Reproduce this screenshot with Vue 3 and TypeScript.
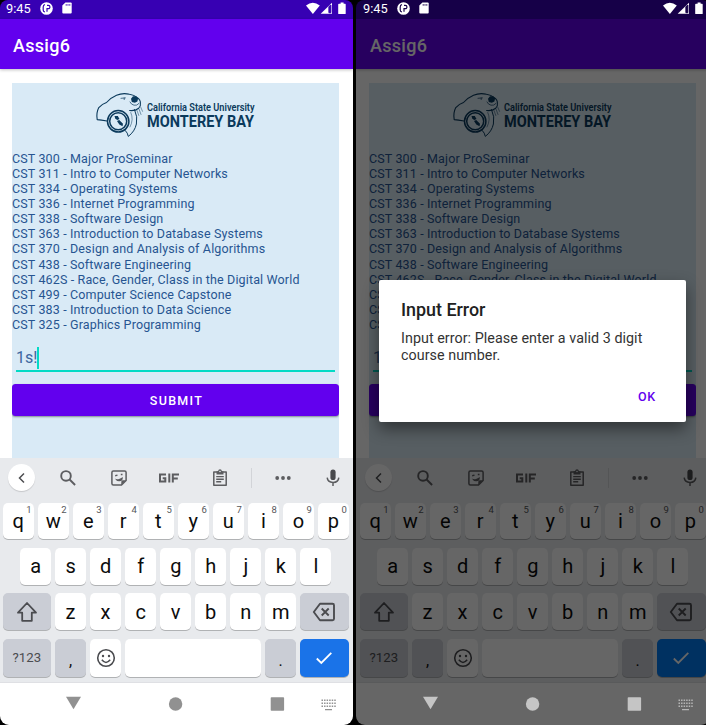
<script setup lang="ts">
interface Phone {
  id: string
  dialog: boolean
}

interface LetterKey {
  label: string
  hint?: string
}

const phones: Phone[] = [
  { id: 'entry', dialog: false },
  { id: 'error', dialog: true },
]

const courses: string[] = [
  'CST 300 - Major ProSeminar',
  'CST 311 - Intro to Computer Networks',
  'CST 334 - Operating Systems',
  'CST 336 - Internet Programming',
  'CST 338 - Software Design',
  'CST 363 - Introduction to Database Systems',
  'CST 370 - Design and Analysis of Algorithms',
  'CST 438 - Software Engineering',
  'CST 462S - Race, Gender, Class in the Digital World',
  'CST 499 - Computer Science Capstone',
  'CST 383 - Introduction to Data Science',
  'CST 325 - Graphics Programming',
]

const topRow: LetterKey[] = [...'qwertyuiop'].map((label, i) => ({
  label,
  hint: String((i + 1) % 10),
}))
const homeRow: string[] = [...'asdfghjkl']
const bottomRow: string[] = [...'zxcvbnm']
</script>

<template>
  <main class="stage">
    <section v-for="phone in phones" :key="phone.id" class="phone" :class="{ dimmed: phone.dialog }">
      <header class="status">
        <span class="clock">9:45</span>
        <svg class="p-icon" viewBox="0 0 13 13" width="13" height="13">
          <circle cx="6.5" cy="6.5" r="6.3" fill="#fff" />
          <path class="cut" d="M5 2.500Q3.200 3 3.200 5V8Q3.200 9.800 5 10M7 3.400H8.300a1.600 1.600 0 0 1 0 3.300H7V9.800" stroke-width="1.200" />
        </svg>
        <svg class="sd-icon" viewBox="0 0 10 12" width="10" height="12">
          <path d="M3.400.5H8.700q1 0 1 1V10.600q0 1-1 1H1.300q-1 0-1-1V3.600z" fill="#fff" />
          <path class="cut" d="M4.200 2v1.800M6 2v1.800M7.800 2v1.800" stroke-width=".8" />
        </svg>
        <span class="spacer"></span>
        <svg class="signals" viewBox="0 0 41 13" width="41" height="13">
          <path d="M0 3.400Q6.800-1.800 13.800 3.400L6.900 12z" fill="#fff" />
          <path d="M14.700 11.800L26 .8V11.800z" fill="#fff" />
          <path class="cut" d="M22.900 4.600V10.700h2V3z" stroke="none" />
          <path d="M33 1.800h1.600V.6h3v1.200h1.500q.6 0 .6.600V11.400q0 .6-.6.600H32.800q-.6 0-.6-.6V2.400q0-.6.8-.6z" fill="#fff" />
        </svg>
      </header>

      <div class="appbar">Assig6</div>

      <div class="content">
        <div class="panel">
          <svg class="logo" viewBox="95 91 162 48" width="162" height="48">
            <g fill="none" stroke="#0b3a5c" stroke-linecap="round" stroke-linejoin="round">
              <path d="M107 121Q101 119.800 97.200 119.600Q96 113 98.800 107.600Q102.500 103.800 106.500 102.500Q110.500 97.800 116.500 95.200Q123 92.500 129.500 94.300Q134 95 137 97.400Q140.600 99.800 140.400 103Q141 106 138.700 108.200Q135 111.200 129.600 110.500" stroke-width="1.100" />
              <path d="M121 98.300l4.400-.4M124.200 98v1.600M130 102q1.400 2.800 4 3.200q3 .8 5-1.800" stroke-width=".7" />
              <path d="M134.500 109.500Q138 117 136.400 124Q134.800 131.500 128.300 136.400Q127.800 133 125.300 130.500" stroke-width="1" />
              <path d="M130.800 112.500q3.200 7-.8 14.500M137 110.500l1.800 5M139 109l2 5.500M140.800 107.300l1.700 4" stroke-width=".5" />
              <circle cx="118.200" cy="121.300" r="10.700" stroke-width="1.500" />
              <circle cx="118.200" cy="121.300" r="8.500" stroke-width="1.500" />
            </g>
            <path d="M131 98.700l2-2.400h3.200l1.900 1.900-.7 3.200-2.600 1.300-3-.8z" fill="#0b3a5c" />
            <path d="M114.500 116h3.300l1.700 3-2.200 1-2-1.300zM117 121l2.200-1 3.800 3.800-.5 2.500-3.200-1.900z" fill="#0b3a5c" />
            <text x="147" y="111.300" class="logo-small" textLength="107.500" lengthAdjust="spacingAndGlyphs">California State University</text>
            <text x="147" y="126.800" class="logo-big" textLength="107" lengthAdjust="spacingAndGlyphs">MONTEREY BAY</text>
          </svg>
          <ul class="courses">
            <li v-for="course in courses" :key="course">{{ course }}</li>
          </ul>
          <div class="field"><span>1s!</span><i v-if="!phone.dialog" class="caret"></i></div>
          <div class="submit">SUBMIT</div>
        </div>
      </div>

      <div class="keyboard">
        <div class="tools">
          <span class="back">
            <svg viewBox="0 0 12 12" width="12" height="12"><path d="M8 1.500L3.500 6 8 10.500" fill="none" stroke="#4c4d50" stroke-width="1.500" /></svg>
          </span>
          <svg viewBox="0 0 18 18" width="18" height="18">
            <g fill="none" stroke="#5c5d60" stroke-width="1.900"><circle cx="7" cy="6.900" r="4.800" /><path d="M10.600 10.500l5.500 5.500" /></g>
          </svg>
          <svg viewBox="0 0 18 18" width="18" height="18">
            <path d="M3.400 2H14.600q1.500 0 1.500 1.500V11.500L11.500 16H3.400Q1.900 16 1.900 14.500V3.500Q1.900 2 3.400 2z" fill="none" stroke="#5c5d60" stroke-width="1.500" />
            <path d="M11.300 16v-3.200q0-1.500 1.500-1.500H16zM4.800 9.600q2 1 4.300.3t3.700-1.900q.3 4.300-3.600 4.300-3 0-4.400-2.700z" fill="#5c5d60" />
            <path d="M5.200 6.700l2.300-.6M10.800 5.500h1.700" stroke="#5c5d60" stroke-width="1.400" />
          </svg>
          <svg viewBox="0 0 22 10" width="22" height="10">
            <path d="M8 1.500H2v7h5.300V5.200H4.700M11.300.5v9M14.800 9.500V1.500H21M14.800 5.400h5" fill="none" stroke="#5c5d60" stroke-width="2" />
          </svg>
          <svg viewBox="0 0 16 18" width="16" height="18">
            <path d="M1.800 3H14.200V16.200H1.800z" fill="none" stroke="#5c5d60" stroke-width="1.500" stroke-linejoin="round" />
            <path d="M4.500 2.200H6Q6.400.3 8 .3T10 2.200h1.500V5.500h-7z" fill="#5c5d60" />
            <circle cx="8" cy="2.500" r=".8" fill="#e8eaed" />
            <path d="M4.200 7.600h7.600M4.200 10.200h7.600M4.200 12.800h5" stroke="#5c5d60" stroke-width="1.400" />
          </svg>
          <i class="divider"></i>
          <svg viewBox="0 0 18 6" width="18" height="6">
            <g fill="#5c5d60"><circle cx="3.200" cy="3" r="1.900" /><circle cx="9" cy="3" r="1.900" /><circle cx="14.800" cy="3" r="1.900" /></g>
          </svg>
          <svg viewBox="0 0 16 20" width="16" height="20">
            <rect x="5.400" y="1.600" width="5.200" height="10.400" rx="2.600" fill="#48494c" />
            <path d="M2.200 9.600q.4 4.700 5.800 4.800t5.800-4.800M8 14.500v3.600" fill="none" stroke="#5c5d60" stroke-width="1.500" />
          </svg>
        </div>

        <div class="row">
          <span v-for="key in topRow" :key="key.label" class="key">{{ key.label }}<sup>{{ key.hint }}</sup></span>
        </div>
        <div class="row centred">
          <span v-for="key in homeRow" :key="key" class="key">{{ key }}</span>
        </div>
        <div class="row">
          <span class="key wide grey">
            <svg viewBox="0 0 22 22" width="22" height="22"><path d="M11 2L20 11.700H15.800V19.800H6.200V11.700H2z" fill="none" stroke="#4b4c50" stroke-width="1.800" stroke-linejoin="round" /></svg>
          </span>
          <span v-for="key in bottomRow" :key="key" class="key">{{ key }}</span>
          <span class="key wide grey">
            <svg viewBox="0 0 24 20" width="24" height="20">
              <path d="M8 1.800H20.500Q22 1.800 22 3.300V16.700Q22 18.200 20.500 18.200H8L1.800 10z" fill="none" stroke="#4b4c50" stroke-width="1.900" stroke-linejoin="round" />
              <path d="M9.700 6.500l7 7M16.700 6.500l-7 7" stroke="#4b4c50" stroke-width="1.900" />
            </svg>
          </span>
        </div>
        <div class="row last">
          <span class="key wide grey symbols">?123</span>
          <span class="key grey punct">,</span>
          <span class="key">
            <svg viewBox="0 0 20 20" width="20" height="20">
              <circle cx="10" cy="10" r="8.300" fill="none" stroke="#4b4c50" stroke-width="1.600" />
              <circle cx="7" cy="8" r="1.200" fill="#4b4c50" /><circle cx="13" cy="8" r="1.200" fill="#4b4c50" />
              <path d="M5.800 11.800Q10 17 14.200 11.800" fill="none" stroke="#4b4c50" stroke-width="1.500" />
            </svg>
          </span>
          <span class="key space"></span>
          <span class="key grey punct">.</span>
          <span class="key wide enter">
            <svg viewBox="0 0 18 14" width="18" height="14"><path d="M1.800 7.500l4.500 4.500L16.300 1.800" fill="none" stroke="#fff" stroke-width="1.800" /></svg>
          </span>
        </div>
      </div>

      <nav class="nav">
        <svg viewBox="0 0 353 42" width="353" height="42">
          <path d="M66 13.700H81L73.500 26.200z" />
          <circle cx="175.600" cy="21" r="6.700" />
          <rect x="270.700" y="14.300" width="13.400" height="13.400" rx=".8" />
          <path d="M321.500 17.200h14.500M321.500 20.200h14.500M321.500 23.200h14.500" class="dots" />
          <path d="M325 26.700h7" class="bar" />
        </svg>
      </nav>

      <div v-if="phone.dialog" class="scrim">
        <div class="dialog">
          <h2>Input Error</h2>
          <p>Input error: Please enter a valid 3 digit course number.</p>
          <div class="ok">OK</div>
        </div>
      </div>
    </section>
  </main>
</template>

<style>
body {
  margin: 0;
  background: #000;
  overflow: hidden;
}
</style>

<style scoped>
.stage {
  display: flex;
  gap: 3px;
  width: 706px;
  height: 725px;
  overflow: hidden;
  background: #000;
  font-family: Roboto, "Liberation Sans", sans-serif;
}
.phone {
  position: relative;
  flex: none;
  display: flex;
  flex-direction: column;
  width: 353px;
  height: 725px;
  overflow: hidden;
  border-radius: 8px 8px 9px 9px;
  background: #000;
  --status: #3700b3;
  --inset: 0px;
}
.dimmed {
  width: 354px;
  --status: #160048;
  --inset: 1px;
}
.status {
  display: flex;
  align-items: center;
  box-sizing: border-box;
  height: 19px;
  padding: 0 6px 0 calc(6px + var(--inset));
  background: var(--status);
  color: #fff;
}
.dimmed .status {
  position: relative;
  z-index: 2;
}
.clock {
  width: 34px;
  margin-top: -3px;
  font-size: 12.8px;
  line-height: 17px;
}
.status svg {
  margin-top: -3px;
}
.status .sd-icon {
  margin-left: 9px;
}
.spacer {
  flex: 1;
}
.cut {
  fill: none;
  stroke: var(--status);
}
.signals .cut {
  fill: var(--status);
}
.appbar {
  position: relative;
  height: 50px;
  padding-left: calc(13px + var(--inset));
  background: #6200ee;
  box-shadow: 0 1px 3px rgba(0, 0, 0, 0.25);
  color: #fff;
  font-size: 18px;
  font-weight: 500;
  letter-spacing: 0.3px;
  line-height: 54px;
}
.content {
  height: 389px;
  box-sizing: border-box;
  padding: 14px 14px 0 calc(12px + var(--inset));
  background: #fff;
}
.panel {
  height: 375px;
  background: #d9eaf6;
  overflow: hidden;
}
.logo {
  display: block;
  margin: 8px 0 0 83px;
  overflow: visible;
}
.logo-small {
  font-size: 10px;
  font-weight: 600;
  fill: #0b3a5c;
}
.logo-big {
  font-size: 15.8px;
  font-weight: 700;
  fill: #0b3a5c;
}
.courses {
  list-style: none;
  margin: 12px 0 0;
  padding: 0;
  color: #275591;
  font-size: 12.5px;
  line-height: 15.08px;
  letter-spacing: 0.14px;
  white-space: nowrap;
}
.field {
  display: flex;
  align-items: center;
  box-sizing: border-box;
  height: 29px;
  margin: 11px 4px 0;
  padding-top: 3px;
  border-bottom: 2px solid #03dac5;
  color: #3c669f;
  font-size: 16px;
}
.caret {
  width: 2px;
  height: 22px;
  background: #03dac5;
}
.submit {
  height: 32px;
  margin-top: 12px;
  padding-left: 2px;
  border-radius: 3.5px;
  background: #6200ee;
  box-shadow: 0 1px 2px rgba(0, 0, 0, 0.4);
  color: #fff;
  font-size: 12.5px;
  font-weight: 500;
  letter-spacing: 1.3px;
  line-height: 33px;
  text-align: center;
}
.keyboard {
  display: flex;
  flex-direction: column;
  box-sizing: border-box;
  height: 225px;
  padding-left: var(--inset);
  background: #e8eaed;
  border-bottom: 1px solid #dfe0e4;
}
.tools {
  display: grid;
  grid-template-columns: 43.4px 49.6px 51.6px 48.6px 54.4px 7.2px 55.8px 45.8px;
  place-items: center;
  height: 39px;
  margin-bottom: 5.8px;
}
.back {
  display: grid;
  place-items: center;
  width: 27px;
  height: 27px;
  border-radius: 50%;
  background: #fff;
  box-shadow: 0 1px 1px rgba(0, 0, 0, 0.15);
}
.divider {
  width: 1px;
  height: 20px;
  background: #d2d4d8;
}
.row {
  display: flex;
  gap: 4.1px;
  height: 36.5px;
  margin-bottom: 8.8px;
  padding-left: 2.7px;
}
.centred {
  padding-left: 20.2px;
}
.last {
  height: 38.3px;
  margin: 0;
}
.key {
  position: relative;
  flex: none;
  display: flex;
  align-items: center;
  justify-content: center;
  width: 30.94px;
  border-radius: 5px;
  background: #fff;
  box-shadow: 0 1px 0.5px rgba(0, 0, 0, 0.24);
  color: #0c0c0c;
  font-size: 20px;
}
.key sup {
  position: absolute;
  top: 2px;
  right: 2px;
  color: #55565a;
  font-size: 9.5px;
  line-height: 10px;
}
.wide {
  width: 48.3px;
}
.grey {
  background: #cacdd5;
}
.symbols {
  color: #4b4c50;
  font-size: 13.2px;
}
.punct {
  box-sizing: border-box;
  padding-top: 5px;
  font-size: 16px;
}
.space {
  width: 136px;
}
.enter {
  background: #1a73e8;
}
.dimmed .enter {
  background: #007af2;
}
.nav {
  height: 42px;
  padding-left: var(--inset);
  background: #fff;
}
.nav svg {
  display: block;
  fill: #919191;
}
.nav .dots {
  stroke: #919191;
  stroke-width: 1.5;
  stroke-dasharray: 1.5 1.05;
}
.nav .bar {
  stroke: #919191;
  stroke-width: 1.3;
}
.dimmed .nav {
  position: relative;
  z-index: 2;
  background: #666;
}
.dimmed .nav svg {
  fill: #c5c5c5;
}
.dimmed .nav .dots,
.dimmed .nav .bar {
  stroke: #b5b5b5;
}
.scrim {
  position: absolute;
  z-index: 1;
  inset: 0;
  background: rgba(0, 0, 0, 0.6);
}
.dialog {
  position: absolute;
  left: 23px;
  top: 280px;
  box-sizing: border-box;
  width: 307px;
  height: 141.7px;
  padding: 19px 22px 0;
  border-radius: 2px;
  background: #fff;
  box-shadow: 0 7px 16px rgba(0, 0, 0, 0.45);
}
.dialog h2 {
  margin: 0;
  color: #212121;
  font-size: 17.9px;
  font-weight: 500;
  line-height: 21px;
}
.dialog p {
  margin: 10px -8px 0 0;
  color: #333;
  font-size: 14.3px;
  letter-spacing: 0.05px;
  line-height: 17.2px;
}
.ok {
  margin-top: 23.5px;
  padding-right: 8px;
  color: #6200ee;
  font-size: 12.5px;
  font-weight: 500;
  letter-spacing: 0.8px;
  line-height: 18px;
  text-align: right;
}
</style>
